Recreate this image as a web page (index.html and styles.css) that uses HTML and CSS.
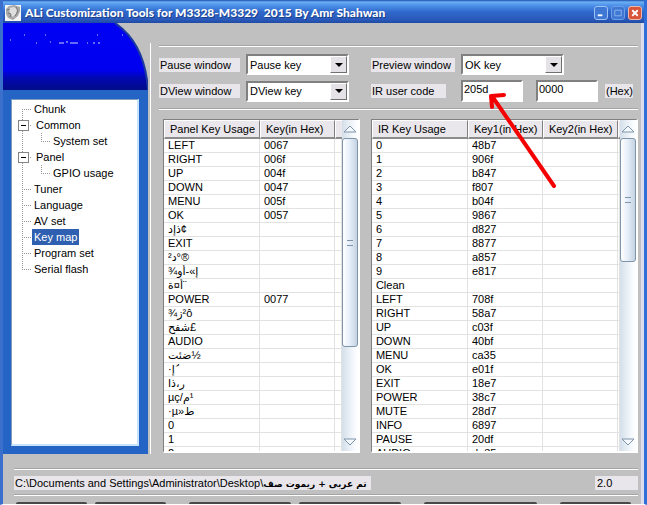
FILE: index.html
```html
<!DOCTYPE html>
<html lang="en">
<head>
    <meta charset="UTF-8">
    <meta name="viewport" content="width=device-width, initial-scale=1.0">
    <title>ALi Customization Tools</title>
    <link rel="stylesheet" href="styles.css">
</head>
<body>
    <div class="window">
        <header class="titlebar">
            <svg class="app-icon" viewBox="0 0 16 16" aria-hidden="true">
                <rect width="16" height="16" fill="#f4f4f4"/>
                <path d="M1 4 L4 1 L9 0 L15 2 L15 6 L13 11 L8 15 L3 13 L1 9Z" fill="#a9a9a9"/>
                <path d="M4 3 L9 2 L12 4 L11 9 L8 12 L5 9Z" fill="#dedede"/>
                <path d="M2 5 L5 4 M3 8 L6 9 L5 12 M11 2 L13 6 L10 11" stroke="#777" fill="none"/>
            </svg>
            <h1>ALi Customization Tools for M3328-M3329 &nbsp;2015 By Amr Shahwan</h1>
            <button class="win-btn" type="button" aria-label="Minimize">
                <svg viewBox="0 0 13 13"><path d="M3 9h5" stroke="#fff" stroke-width="2"/></svg>
            </button>
            <button class="win-btn dim" type="button" aria-label="Maximize">
                <svg viewBox="0 0 13 13"><path d="M3 3.5h7v6h-7z" stroke="#8db4ec" fill="none"/></svg>
            </button>
            <button class="win-btn close" type="button" aria-label="Close">
                <svg viewBox="0 0 13 13"><path d="M3.5 3.5l6 6M9.5 3.5l-6 6" stroke="#fff" stroke-width="2"/></svg>
            </button>
        </header>

        <div class="content">
            <nav class="sidebar">
                <svg class="banner" viewBox="0 0 145 67" preserveAspectRatio="none" aria-hidden="true">
                    <defs>
                        <linearGradient id="sky" x1="0" y1="0" x2="0" y2="1">
                            <stop offset="0" stop-color="#0000f4"/>
                            <stop offset="0.7" stop-color="#0000f0"/>
                            <stop offset="0.82" stop-color="#0008b0"/>
                            <stop offset="1" stop-color="#000c88"/>
                        </linearGradient>
                    </defs>
                    <rect width="145" height="67" fill="#c0c0c0"/>
                    <path d="M0 0H112C131 13 143 36 145 67H0Z" fill="url(#sky)"/>
                    <path d="M112 0C131 13 143 36 145 67" fill="none" stroke="#1c3c9c" stroke-width="2"/>
                    <path d="M7 17h1M21 12h1M33 20h1M42 12h1M47 19h1M56 20h5M63 19h2M67 20h8M84 20h1M90 20h2M94 12h1M95 20h2M119 12h1" stroke="#cfd4ff"/>
                </svg>
                <ul class="tree">
                    <li><a href="#">Chunk</a></li>
                    <li class="open"><a href="#">Common</a></li>
                    <li class="child"><a href="#">System set</a></li>
                    <li class="open"><a href="#">Panel</a></li>
                    <li class="child"><a href="#">GPIO usage</a></li>
                    <li><a href="#">Tuner</a></li>
                    <li><a href="#">Language</a></li>
                    <li><a href="#">AV set</a></li>
                    <li><a href="#" class="selected">Key map</a></li>
                    <li><a href="#">Program set</a></li>
                    <li class="last"><a href="#">Serial flash</a></li>
                </ul>
            </nav>

            <main class="main">
                <form class="options">
                    <label class="tag" for="pause">Pause window</label>
                    <div class="combo">
                        <select id="pause"><option>Pause key</option></select>
                        <span class="arrow"></span>
                    </div>
                    <label class="tag" for="preview">Preview window</label>
                    <div class="combo">
                        <select id="preview"><option>OK key</option></select>
                        <span class="arrow"></span>
                    </div>
                    <label class="tag" for="dview">DView window</label>
                    <div class="combo">
                        <select id="dview"><option>DView key</option></select>
                        <span class="arrow"></span>
                    </div>
                    <label class="tag short" for="code1">IR user code</label>
                    <div class="codes">
                        <input type="text" id="code1" value="205d">
                        <input type="text" id="code2" value="0000" aria-label="IR user code, second part">
                        <label class="tag" for="code2">(Hex)</label>
                    </div>
                </form>

                <div class="lists">
                    <div class="list panel-list">
                        <div class="rows">
                            <table>
                                <colgroup><col class="c-name"><col class="c-key"><col></colgroup>
                                <thead><tr><th>Panel Key Usage</th><th>Key(in Hex)</th><th></th></tr></thead>
                                <tbody>
                                    <tr><td>LEFT</td><td>0067</td><td></td></tr>
                                    <tr><td>RIGHT</td><td>006f</td><td></td></tr>
                                    <tr><td>UP</td><td>004f</td><td></td></tr>
                                    <tr><td>DOWN</td><td>0047</td><td></td></tr>
                                    <tr><td>MENU</td><td>005f</td><td></td></tr>
                                    <tr><td>OK</td><td>0057</td><td></td></tr>
                                    <tr><td>ذإد¢</td><td></td><td></td></tr>
                                    <tr><td>EXIT</td><td></td><td></td></tr>
                                    <tr><td>د²°®</td><td></td><td></td></tr>
                                    <tr><td>¾إ»-أو</td><td></td><td></td></tr>
                                    <tr><td>أ¤ة¨</td><td></td><td></td></tr>
                                    <tr><td>POWER</td><td>0077</td><td></td></tr>
                                    <tr><td>¾ز&lrm;²ô</td><td></td><td></td></tr>
                                    <tr><td>شفح£</td><td></td><td></td></tr>
                                    <tr><td>AUDIO</td><td></td><td></td></tr>
                                    <tr><td>ضئت½</td><td></td><td></td></tr>
                                    <tr><td>·إ´َ</td><td></td><td></td></tr>
                                    <tr><td>ر،ذا</td><td></td><td></td></tr>
                                    <tr><td>µç/م&lrm;¹</td><td></td><td></td></tr>
                                    <tr><td>·µ»ط</td><td></td><td></td></tr>
                                    <tr><td>0</td><td></td><td></td></tr>
                                    <tr><td>1</td><td></td><td></td></tr>
                                    <tr><td>2</td><td></td><td></td></tr>
                                </tbody>
                            </table>
                        </div>
                        <div class="scrollbar">
                            <button type="button" aria-label="Scroll up"><svg viewBox="0 0 14 8"><path d="M1 7L7 1L13 7Z"/></svg></button>
                            <div class="track"><span class="thumb tall"></span></div>
                            <button type="button" aria-label="Scroll down"><svg viewBox="0 0 14 8"><path d="M1 1L7 7L13 1Z"/></svg></button>
                        </div>
                    </div>

                    <div class="list ir-list">
                        <div class="rows">
                            <table>
                                <colgroup><col class="c-name"><col class="c-key"><col class="c-key"><col></colgroup>
                                <thead><tr><th>IR Key Usage</th><th>Key1(in Hex)</th><th>Key2(in Hex)</th><th></th></tr></thead>
                                <tbody>
                                    <tr><td>0</td><td>48b7</td><td></td><td></td></tr>
                                    <tr><td>1</td><td>906f</td><td></td><td></td></tr>
                                    <tr><td>2</td><td>b847</td><td></td><td></td></tr>
                                    <tr><td>3</td><td>f807</td><td></td><td></td></tr>
                                    <tr><td>4</td><td>b04f</td><td></td><td></td></tr>
                                    <tr><td>5</td><td>9867</td><td></td><td></td></tr>
                                    <tr><td>6</td><td>d827</td><td></td><td></td></tr>
                                    <tr><td>7</td><td>8877</td><td></td><td></td></tr>
                                    <tr><td>8</td><td>a857</td><td></td><td></td></tr>
                                    <tr><td>9</td><td>e817</td><td></td><td></td></tr>
                                    <tr><td>Clean</td><td></td><td></td><td></td></tr>
                                    <tr><td>LEFT</td><td>708f</td><td></td><td></td></tr>
                                    <tr><td>RIGHT</td><td>58a7</td><td></td><td></td></tr>
                                    <tr><td>UP</td><td>c03f</td><td></td><td></td></tr>
                                    <tr><td>DOWN</td><td>40bf</td><td></td><td></td></tr>
                                    <tr><td>MENU</td><td>ca35</td><td></td><td></td></tr>
                                    <tr><td>OK</td><td>e01f</td><td></td><td></td></tr>
                                    <tr><td>EXIT</td><td>18e7</td><td></td><td></td></tr>
                                    <tr><td>POWER</td><td>38c7</td><td></td><td></td></tr>
                                    <tr><td>MUTE</td><td>28d7</td><td></td><td></td></tr>
                                    <tr><td>INFO</td><td>6897</td><td></td><td></td></tr>
                                    <tr><td>PAUSE</td><td>20df</td><td></td><td></td></tr>
                                    <tr><td>AUDIO</td><td>da35</td><td></td><td></td></tr>
                                </tbody>
                            </table>
                        </div>
                        <div class="scrollbar">
                            <button type="button" aria-label="Scroll up"><svg viewBox="0 0 14 8"><path d="M1 7L7 1L13 7Z"/></svg></button>
                            <div class="track"><span class="thumb"></span></div>
                            <button type="button" aria-label="Scroll down"><svg viewBox="0 0 14 8"><path d="M1 1L7 7L13 1Z"/></svg></button>
                        </div>
                    </div>
                </div>
            </main>
        </div>

        <footer class="footer">
            <div class="status">
                <span class="tag path">C:\Documents and Settings\Administrator\Desktop\<b>تم عربى + ريموت صف</b></span>
                <span class="tag version">2.0</span>
            </div>
            <div class="actions">
                <div class="group"><span></span><span></span></div>
                <div class="group wide"><span></span><span></span></div>
                <div class="group wider"><span></span></div>
                <div class="group single"><span></span></div>
            </div>
        </footer>

        <!-- pointer drawn over the IR user code -->
        <svg class="pointer" viewBox="0 0 72 100" aria-hidden="true">
            <path d="M69 95L9 8M7 16L6 5L19 4" fill="none" stroke="#f40000" stroke-width="4" stroke-linecap="round" stroke-linejoin="round"/>
        </svg>
    </div>
</body>
</html>
```

FILE: styles.css
```css
* {
    box-sizing: border-box;
}
body {
    margin: 0;
    font-family: "Liberation Sans", Arial, "DejaVu Sans", sans-serif;
    font-size: 11px;
    line-height: 14px;
    color: #000;
}
button {
    padding: 0;
    border: none;
    background: none;
}

/* window frame */
.window {
    position: relative;
    display: flex;
    flex-direction: column;
    height: 100vh;
    overflow: hidden;
    background-color: #c0c0c0;
    border-left: 3px solid #3a70cc;
    border-right: 3px solid #2f6fd8;
    border-bottom: 1px solid #fff;
    box-shadow: inset -3px 0 #dcdcec;
}
.titlebar {
    display: flex;
    align-items: center;
    gap: 3px;
    flex: none;
    height: 23px;
    margin: 0 -3px;
    padding: 3px 5px 0;
    background: linear-gradient(#1c4fae 0, #6cb0f4 2px, #4f94ea 5px, #2f68cc 12px, #2a58b8 20px, #1d4aa4 23px);
    border-radius: 4px 4px 0 0;
}
.titlebar h1 {
    flex: 1;
    margin: 0 0 0 1px;
    font-family: Lato, "Open Sans", sans-serif;
    font-size: 12px;
    line-height: 16px;
    font-weight: 900;
    color: #fff;
    white-space: nowrap;
    text-shadow: 1px 1px 0 #1b3f8a;
}
.app-icon {
    width: 16px;
    height: 16px;
}
.win-btn {
    width: 14px;
    height: 14px;
    border: 1px solid #9dc2f4;
    border-radius: 3px;
    background-color: #3f78d4;
}
.win-btn svg {
    display: block;
}
.win-btn.dim {
    border-color: #6c9ee6;
}
.win-btn.close {
    border-color: #f0b8a8;
    background-color: #d8553a;
}

.content {
    display: flex;
    flex: 1;
    min-height: 0;
}

/* left side with the tree */
.sidebar {
    display: flex;
    flex-direction: column;
    flex: none;
    width: 145px;
    background-color: #2464c4;
}
.banner {
    flex: none;
    width: 100%;
    height: 67px;
}
.tree {
    flex: 1;
    margin: 9px 9px 8px 8px;
    padding: 1px 0 0 10px;
    list-style: none;
    background-color: #fff;
    border: 1px solid #7f9db9;
    border-right: 2px solid #c8e4fc;
    border-bottom: 2px solid #c8e4fc;
}
.tree li {
    display: flex;
    align-items: center;
    height: 16px;
    padding-left: 10px;
    background-image:
        repeating-linear-gradient(90deg, #999 0 1px, transparent 1px 2px),
        repeating-linear-gradient(#999 0 1px, transparent 1px 2px);
    background-size: 9px 1px, 1px 16px;
    background-position: 0 8px, 0 0;
    background-repeat: no-repeat;
}
.tree li:first-child {
    background-position: 0 8px, 0 8px;
}
.tree li.last {
    background-size: 9px 1px, 1px 8px;
}
.tree li.child {
    padding-left: 29px;
    background-image:
        repeating-linear-gradient(90deg, #999 0 1px, transparent 1px 2px),
        repeating-linear-gradient(#999 0 1px, transparent 1px 2px),
        repeating-linear-gradient(#999 0 1px, transparent 1px 2px);
    background-size: 9px 1px, 1px 16px, 1px 8px;
    background-position: 19px 8px, 0 0, 19px 0;
}
.tree li.open::before {
    content: "";
    width: 9px;
    height: 9px;
    margin-left: -14px;
    margin-right: 5px;
    border: 1px solid #848484;
    background: linear-gradient(#000, #000) center / 5px 1px no-repeat #fff;
}
.tree a {
    padding: 0 2px;
    line-height: 16px;
    color: #000;
    text-decoration: none;
}
.tree a.selected {
    color: #fff;
    background-color: #2f5fb0;
}

/* right side */
.main {
    display: flex;
    flex-direction: column;
    flex: 1;
    min-width: 0;
    margin: 20px 0 0 2px;
    padding: 3px 6px 1px 8px;
    border-left: 1px solid #fff;
}
.options {
    display: grid;
    grid-template-columns: 81px 119px 84px 1fr;
    column-gap: 6px;
    row-gap: 5px;
    align-items: center;
    padding: 7px 0;
    border-top: 1px solid #fff;
    border-bottom: 1px solid #fff;
    box-shadow: 0 -1px #a4a4a4, inset 0 -1px #a4a4a4;
}
.tag {
    height: 14px;
    padding-left: 1px;
    background-color: #e8e6ea;
    white-space: nowrap;
}
.tag.short {
    width: 75px;
}
.combo {
    display: grid;
    grid-template-columns: 1fr 17px;
    width: 103px;
    height: 21px;
    background-color: #fff;
    border: 2px solid #fff;
    border-top-color: #808080;
    border-left-color: #808080;
}
.combo select {
    grid-area: 1 / 1 / 2 / 3;
    padding: 0 0 0 2px;
    border: none;
    background: none;
    appearance: none;
    font: inherit;
    color: #000;
}
.combo .arrow {
    grid-area: 1 / 2;
    display: flex;
    align-items: center;
    justify-content: center;
    background-color: #e4e2e6;
    border: 1px solid #fff;
    border-right-color: #707070;
    border-bottom-color: #707070;
    pointer-events: none;
}
.combo .arrow::before {
    content: "";
    border: 4px solid transparent;
    border-top-color: #000;
    border-bottom: none;
}
.codes {
    display: flex;
    align-items: center;
    gap: 13px;
}
.codes input {
    width: 62px;
    height: 22px;
    padding: 0 1px 4px;
    border: 2px solid #fff;
    border-top-color: #808080;
    border-left-color: #808080;
    font: inherit;
}
.codes .tag {
    margin-left: -6px;
}

.lists {
    display: flex;
    flex: 1;
    gap: 11px;
    min-height: 0;
    padding: 9px 0 0 4px;
}
.list {
    display: flex;
    min-width: 0;
    background-color: #fff;
    border: 1px solid #808080;
    border-right: 2px solid #fff;
    border-bottom: 2px solid #fff;
}
.panel-list {
    flex: 196;
}
.ir-list {
    flex: 267;
}
.rows {
    flex: 1;
    min-width: 0;
    overflow: hidden;
}
table {
    width: 100%;
    table-layout: fixed;
    border-collapse: separate;
    border-spacing: 0;
}
.c-name {
    width: 96px;
}
.c-key {
    width: 75px;
}
th, td {
    padding: 0;
    overflow: hidden;
    white-space: nowrap;
    text-align: left;
}
th {
    height: 19px;
    padding-left: 5px;
    font-weight: normal;
    background-color: #e9e7eb;
    border-right: 1px solid #808080;
    border-bottom: 2px solid #8c8c8c;
    border-top: 1px solid #fff;
    border-left: 1px solid #fff;
}
th:last-child {
    border-right: none;
}
td {
    height: 14px;
    padding-left: 4px;
    line-height: 13px;
    border-right: 1px solid #e2e2e2;
    border-bottom: 1px solid #e2e2e2;
}

.scrollbar {
    display: flex;
    flex-direction: column;
    flex: none;
    width: 16px;
    background: linear-gradient(90deg, #d4dfea, #f4f8fc 70%, #fff);
}
.scrollbar button {
    height: 18px;
}
.scrollbar svg {
    display: block;
    width: 14px;
    height: 8px;
    margin: 0 auto;
    fill: #f4f8ff;
    stroke: #7f93a8;
}
.track {
    flex: 1;
}
.thumb {
    display: flex;
    align-items: center;
    justify-content: center;
    height: 42%;
    border: 1px solid #8094a8;
    border-radius: 3px;
    background: linear-gradient(90deg, #fff, #e4edf8 50%, #c4d2e2);
}
.thumb.tall {
    height: 71%;
}
.thumb::before {
    content: "";
    width: 6px;
    height: 4px;
    border-top: 1px solid #8094a8;
    border-bottom: 1px solid #8094a8;
}

/* status line and the tops of the action buttons */
.footer {
    flex: none;
    padding: 15px 6px 0 11px;
}
.status {
    display: flex;
    align-items: center;
    justify-content: space-between;
    height: 27px;
    border-top: 1px solid #fff;
    border-bottom: 1px solid #fff;
    box-shadow: 0 -1px #a4a4a4, inset 0 -1px #a4a4a4;
}
.path {
    padding-right: 4px;
}
.path b {
    font-family: "DejaVu Sans", sans-serif;
    font-size: 9px;
}
.version {
    width: 43px;
    padding-left: 2px;
}
.actions {
    display: flex;
    justify-content: space-between;
    height: 8px;
    padding: 6px 7px 0 2px;
}
.group {
    display: flex;
    flex: 0 1 150px;
    gap: 8px;
}
.group.wide {
    flex-basis: 212px;
}
.group.wider {
    flex-basis: 113px;
}
.group.single {
    flex-basis: 71px;
}
.group span {
    flex: 1;
    height: 2px;
    border-radius: 2px 2px 0 0;
    background-color: #484848;
}

.pointer {
    position: absolute;
    left: 482px;
    top: 91px;
    width: 72px;
    height: 100px;
    pointer-events: none;
}
```
